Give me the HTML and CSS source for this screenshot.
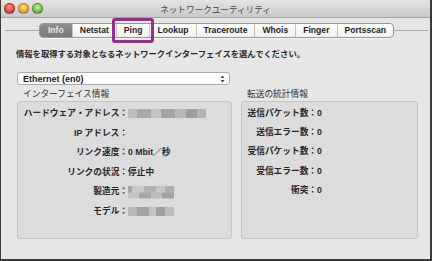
FILE: index.html
```html
<!DOCTYPE html>
<html lang="ja">
<head>
    <meta charset="UTF-8">
    <title>ネットワークユーティリティ</title>
    <link rel="stylesheet" href="styles.css">
</head>
<body>
    <div class="window">
        <div class="titlebar">
            <div class="lights">
                <span class="light red"></span>
                <span class="light yellow"></span>
                <span class="light green"></span>
            </div>
            <div class="title">ネットワークユーティリティ</div>
        </div>

        <div class="content">
            <div class="tabbar">
                <div class="rule"></div>
                <div class="tabs">
                    <span class="tab selected">Info</span>
                    <span class="tab">Netstat</span>
                    <span class="tab marked">Ping</span>
                    <span class="tab">Lookup</span>
                    <span class="tab">Traceroute</span>
                    <span class="tab">Whois</span>
                    <span class="tab">Finger</span>
                    <span class="tab">Portsscan</span>
                </div>
                <div class="rule"></div>
            </div>

            <p class="prompt">情報を取得する対象となるネットワークインターフェイスを選んでください。</p>

            <div class="popup">
                <span>Ethernet (en0)</span>
                <svg width="5" height="8" viewBox="0 0 5 8">
                    <path d="M2.5 0.5 L4.5 3 H0.5 Z M2.5 7.5 L4.5 5 H0.5 Z" fill="#444"/>
                </svg>
            </div>

            <div class="groups">
                <section class="group iface">
                    <h2>インターフェイス情報</h2>
                    <div class="box">
                        <span class="key">ハードウェア・アドレス：</span><span class="val"><i class="blur wide"></i></span>
                        <span class="key">IP アドレス：</span><span class="val"></span>
                        <span class="key">リンク速度：</span><span class="val">0 Mbit／秒</span>
                        <span class="key">リンクの状況：</span><span class="val">停止中</span>
                        <span class="key">製造元：</span><span class="val"><i class="blur tall"></i></span>
                        <span class="key">モデル：</span><span class="val"><i class="blur"></i></span>
                    </div>
                </section>
                <section class="group stats">
                    <h2>転送の統計情報</h2>
                    <div class="box">
                        <span class="key">送信パケット数：</span><span class="val">0</span>
                        <span class="key">送信エラー数：</span><span class="val">0</span>
                        <span class="key">受信パケット数：</span><span class="val">0</span>
                        <span class="key">受信エラー数：</span><span class="val">0</span>
                        <span class="key">衝突：</span><span class="val">0</span>
                    </div>
                </section>
            </div>
        </div>
    </div>
</body>
</html>
```

FILE: styles.css
```css
/* Global */
* {
    margin: 0;
    padding: 0;
    box-sizing: border-box;
}

body {
    width: 432px;
    height: 261px;
    background: #3a3a3a;
    font-family: 'Liberation Sans', 'Noto Sans CJK JP', sans-serif;
    color: #222;
}

/* Window frame */
.window {
    width: 429px;
    height: 259px;
    margin-left: 1px;
    background: #e6e6e6;
    display: flex;
    flex-direction: column;
}

/* Title bar */
.titlebar {
    height: 18px;
    background: linear-gradient(#e4e4e4, #c9c9c9);
    border-bottom: 1px solid #a6a6a6;
    display: flex;
    align-items: center;
    padding-left: 3px;
}

.lights {
    display: flex;
    gap: 3px;
}

.light {
    width: 11px;
    height: 11px;
    border-radius: 50%;
    border: 1px solid rgba(0, 0, 0, 0.25);
}

.red { background: radial-gradient(circle at 50% 35%, #ff9c92, #e2453a 60%, #b3271f); }
.yellow { background: radial-gradient(circle at 50% 35%, #ffe29a, #e9a92a 60%, #b97b12); }
.green { background: radial-gradient(circle at 50% 35%, #c8f0a4, #74bf46 60%, #4a8f25); }

.title {
    flex: 1;
    text-align: center;
    font-family: 'Noto Sans CJK JP', sans-serif;
    font-size: 8.6px;
    color: #4a4a4a;
    margin-right: 42px;
}

/* Tabs */
.content {
    flex: 1;
    padding: 5px 2px 0 4px;
}

.tabbar {
    display: flex;
    align-items: center;
}

.rule {
    flex: 1;
    border-top: 1px solid #a9a9a9;
}

.tabs {
    display: flex;
    height: 15px;
    border: 1px solid #979797;
    border-radius: 4px;
    background: linear-gradient(#ffffff, #f0f0f0);
    box-shadow: 0 1px 0 rgba(255, 255, 255, 0.6);
}

.tab {
    padding: 0 7px;
    font-size: 8.6px;
    font-weight: bold;
    line-height: 13px;
    color: #1e1e1e;
    border-left: 1px solid #c4c4c4;
    position: relative;
}

.tab:first-child {
    border-left: none;
}

.tab.selected {
    background: linear-gradient(#8e8e8e, #7b7b7b);
    color: #e4e4e4;
    border-radius: 3px 0 0 3px;
    padding: 0 8px;
}

/* annotation box round Ping */
.tab.marked::after {
    content: "";
    position: absolute;
    left: -5px;
    right: -5px;
    top: -6px;
    bottom: -6px;
    border: 3px solid #9c2b8f;
    border-radius: 3px;
}

/* Prompt + popup */
.prompt {
    font-size: 8.3px;
    font-weight: bold;
    color: #2a2a2a;
    margin: 10px 0 0 11px;
    line-height: 12px;
}

.popup {
    width: 213px;
    height: 13px;
    margin: 12px 0 0 12px;
    background: #fff;
    border: 1px solid #ababab;
    border-radius: 3px;
    display: flex;
    align-items: center;
    justify-content: space-between;
    padding: 0 4px 0 5px;
    font-size: 9px;
    font-weight: bold;
    color: #222;
}

/* Groups */
.groups {
    display: flex;
    gap: 9px;
    margin: 3px 0 0 12px;
}

.group h2 {
    font-family: 'Noto Sans CJK JP', sans-serif;
    font-size: 8.7px;
    font-weight: normal;
    color: #333;
    line-height: 12px;
    padding-left: 6px;
}

.box {
    height: 138px;
    margin-top: 1px;
    background: #dcdcdc;
    border: 1px solid #c6c6c6;
    border-radius: 3px;
    display: grid;
    align-content: start;
    padding-top: 2px;
    font-size: 8.7px;
    font-weight: bold;
    color: #262626;
    line-height: 19.6px;
}

.iface .box {
    width: 215px;
    grid-template-columns: 110px 1fr;
}

.stats .box {
    width: 177px;
    grid-template-columns: 75px 1fr;
    line-height: 19.2px;
}

.key {
    text-align: right;
    white-space: nowrap;
}

.val {
    display: flex;
    align-items: center;
}

/* blurred values */
.blur {
    display: block;
    width: 46px;
    height: 9px;
    background: linear-gradient(90deg, #b9b9b9 0 20%, #a4a4a4 20% 45%, #c4c4c4 45% 60%, #9f9f9f 60% 80%, #bdbdbd 80%);
    filter: blur(0.6px);
}

.blur.wide {
    width: 78px;
    background: linear-gradient(90deg, #bcbcbc 0 12%, #a9a9a9 12% 30%, #c2c2c2 30% 42%, #a3a3a3 42% 60%, #b7b7b7 60% 75%, #9e9e9e 75% 88%, #b4b4b4 88%);
}

.blur.tall {
    height: 13px;
    background:
        linear-gradient(90deg, #a6a6a6 0 8%, #c8c8c8 8% 35%, #b2b2b2 35% 60%, #c6c6c6 60% 80%, #b0b0b0 80%) top / 100% 50% no-repeat,
        linear-gradient(90deg, #c4c4c4 0 25%, #a8a8a8 25% 50%, #bcbcbc 50% 75%, #a2a2a2 75%) bottom / 100% 50% no-repeat;
}
```
